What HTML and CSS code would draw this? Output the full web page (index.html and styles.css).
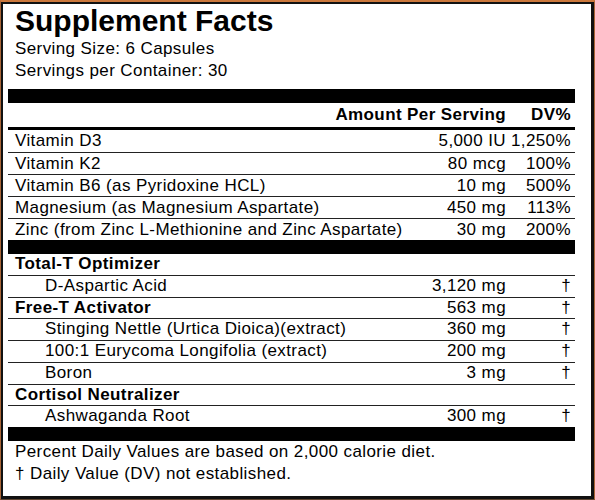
FILE: index.html
```html
<!DOCTYPE html>
<html lang="en">
<head>
  <meta charset="UTF-8" />
  <meta name="viewport" content="width=device-width, initial-scale=1.0"/>
  <title>Supplement Facts</title>
  <link rel="stylesheet" href="styles.css">
</head>
<body>
  <div class="frame">
    <div class="label">
      <h1 class="title">Supplement Facts</h1>
      <p class="serving">Serving Size: 6 Capsules</p>
      <p class="serving">Servings per Container: 30</p>

      <div class="bar bar-top"></div>
      <div class="row head">
        <span class="amt-head">Amount Per Serving</span>
        <span class="dv">DV%</span>
      </div>

      <!-- Vitamins & minerals -->
      <div class="rows vitamins">
        <div class="row"><span>Vitamin D3</span><span class="amt">5,000 IU</span><span class="dv">1,250%</span></div>
        <div class="row"><span>Vitamin K2</span><span class="amt">80 mcg</span><span class="dv">100%</span></div>
        <div class="row"><span>Vitamin B6 (as Pyridoxine HCL)</span><span class="amt">10 mg</span><span class="dv">500%</span></div>
        <div class="row"><span>Magnesium (as Magnesium Aspartate)</span><span class="amt">450 mg</span><span class="dv">113%</span></div>
        <div class="row"><span>Zinc (from Zinc L-Methionine and Zinc Aspartate)</span><span class="amt">30 mg</span><span class="dv">200%</span></div>
      </div>

      <div class="bar"></div>

      <!-- Blends -->
      <div class="rows blends">
        <div class="row group"><span>Total-T Optimizer</span></div>
        <div class="row sub"><span>D-Aspartic Acid</span><span class="amt">3,120 mg</span><span class="dv">&dagger;</span></div>
        <div class="row group"><span>Free-T Activator</span><span class="amt">563 mg</span><span class="dv">&dagger;</span></div>
        <div class="row sub"><span>Stinging Nettle (Urtica Dioica)(extract)</span><span class="amt">360 mg</span><span class="dv">&dagger;</span></div>
        <div class="row sub"><span>100:1 Eurycoma Longifolia (extract)</span><span class="amt">200 mg</span><span class="dv">&dagger;</span></div>
        <div class="row sub"><span>Boron</span><span class="amt">3 mg</span><span class="dv">&dagger;</span></div>
        <div class="row group"><span>Cortisol Neutralizer</span></div>
        <div class="row sub"><span>Ashwaganda Root</span><span class="amt">300 mg</span><span class="dv">&dagger;</span></div>
      </div>

      <div class="bar"></div>

      <p class="note">Percent Daily Values are based on 2,000 calorie diet.</p>
      <p class="note">&dagger; Daily Value (DV) not established.</p>
    </div>
  </div>
</body>
</html>
```

FILE: styles.css
```css
body {
  margin: 0;
  background: #fff;
  color: #000;
  font-family: 'Liberation Sans', Arial, Helvetica, sans-serif;
}

.frame {
  width: 595px;
  height: 500px;
  box-sizing: border-box;
  border-style: solid;
  border-width: 2px 1px 1px 1px;
  border-color: #cc783c #a86436 #5e4431 #a86436;
}

.label {
  height: 100%;
  box-sizing: border-box;
  border-style: solid;
  border-color: #111;
  border-width: 2px 3px 3px 2px;
  padding: 1px 16px 0 5px;
  background: #fff;
}

.title {
  margin: 0;
  padding-left: 7px;
  font-size: 30px;
  line-height: 32px;
  font-weight: bold;
}

.serving,
.note {
  margin: 0;
  padding-left: 7px;
  font-size: 17px;
  line-height: 22px;
  letter-spacing: 0.4px;
}

.serving:first-of-type {
  margin-top: 1px;
}

.bar {
  height: 14px;
  background: #000;
}

.bar-top {
  margin-top: 7px;
}

.row {
  display: grid;
  grid-template-columns: minmax(0, 1fr) 130px 65px;
  padding: 0 4px 0 7px;
  font-size: 17px;
  line-height: 21px;
  letter-spacing: 0.4px;
  white-space: nowrap;
  border-bottom: 1px solid #222;
}

.row .amt,
.row .dv {
  text-align: right;
}

.head {
  line-height: 24px;
  font-weight: bold;
  border-bottom: 3px solid #000;
}

.amt-head {
  grid-column: 1 / 3;
  text-align: right;
}

.vitamins .row:first-child {
  line-height: 22px;
}

.blends .row {
  line-height: 20.75px;
}

.rows .row:last-child {
  border-bottom: none;
}

.group {
  font-weight: bold;
}

.group .amt,
.group .dv {
  font-weight: normal;
}

.sub span:first-child {
  padding-left: 30px;
}
```
